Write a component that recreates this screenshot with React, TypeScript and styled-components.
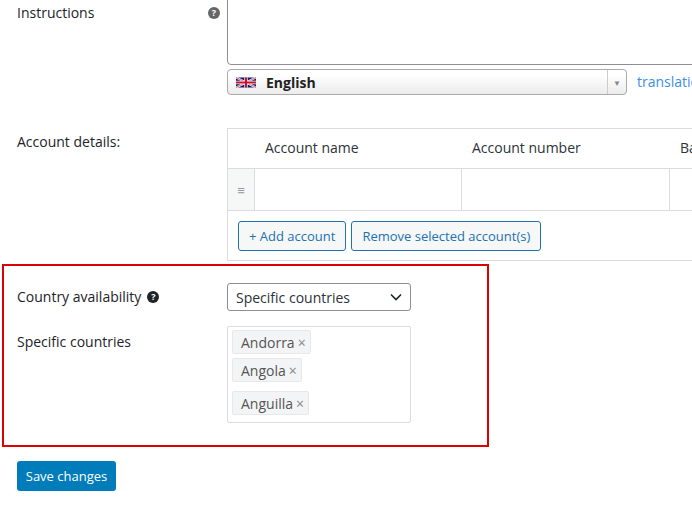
import React from "react";
import styled, { createGlobalStyle } from "styled-components";

const Global = createGlobalStyle`
  body { margin: 0; background: #fff; font-family: "Open Sans", "Noto Sans", sans-serif; font-size: 14px; color: #1d2327; overflow: hidden; }
`;
const Frame = styled.div` width: 692px; height: 518px; overflow: hidden; `;
const Page = styled.div` margin-top: -17px; padding-left: 17px; width: 760px; `;
const Row = styled.div<{ $mt?: number }>` display: flex; margin-top: ${p => p.$mt ?? 0}px; `;
const Label = styled.div<{ $pt?: number }>`
  width: 210px; flex: none; padding-top: ${p => p.$pt ?? 0}px; font-weight: 500; color: #1d2327;
  display: flex; align-items: flex-start; gap: 6px; line-height: 20px;
`;
const LabelText = styled.span` flex: 1; `;
const Help = styled.span<{ $inline?: boolean }>`
  width: 12px; height: 12px; border-radius: 50%; background: ${p => p.$inline ? "#1d2327" : "#666"}; color: #fff;
  font-size: 9px; font-weight: 700; display: inline-flex; align-items: center; justify-content: center; margin-top: 4px;
  margin-right: ${p => p.$inline ? 0 : 7}px; flex: none;
`;
const Field = styled.div` flex: 1; display: flex; flex-direction: column; `;
const TextArea = styled.div` height: 80px; border: 1px solid #8c8f94; border-radius: 0 0 4px 4px; `;
const LangRow = styled.div` display: flex; align-items: flex-start; gap: 10px; margin-top: 4px; `;
const LangSel = styled.div`
  width: 400px; height: 26px; box-sizing: border-box; border: 1px solid #aaa; border-radius: 4px;
  background: linear-gradient(#fff 20%, #ececec); display: flex; align-items: center; padding-left: 8px;
  font-weight: 700; color: #222; gap: 10px;
`;
const LangArrow = styled.div`
  margin-left: auto; width: 18px; align-self: stretch; border-left: 1px solid #ccc; display: flex;
  align-items: center; justify-content: center; font-size: 8px; color: #888;
`;
const Link = styled.span` color: #3a8ee6; font-size: 14px; margin-top: 3px; white-space: nowrap; `;
const Table = styled.div` width: 520px; border: 1px solid #dcdcde; `;
const TRow = styled.div<{ $h: number; $bt?: boolean }>`
  display: grid; grid-template-columns: 27px 207px 208px 1fr; height: ${p => p.$h}px;
  border-top: ${p => p.$bt ? "1px solid #dcdcde" : "none"};
`;
const Th = styled.div` padding-left: 10px; display: flex; align-items: center; font-weight: 500; color: #2c3338; white-space: nowrap; padding-bottom: 2px; `;
const Handle = styled.div` background: #f6f7f7; border-right: 1px solid #dcdcde; display: flex; align-items: center; justify-content: center; color: #999; font-size: 13px; `;
const Td = styled.div<{ $br?: boolean }>` border-right: ${p => p.$br ? "1px solid #dcdcde" : "none"}; `;
const Foot = styled.div` border-top: 1px solid #dcdcde; padding: 10px 10px 9px; display: flex; gap: 5px; `;
const Btn = styled.div`
  height: 30px; box-sizing: border-box; border: 1px solid #2271b1; border-radius: 3px; background: #f6f7f7;
  color: #2271b1; padding: 0 10px; display: flex; align-items: center; font-size: 13px;
`;
const Box = styled.div` margin: 3px 0 0 -15px; width: 487px; height: 183px; box-sizing: border-box; border: 2px solid #d00; padding: 17px 0 0 13px; `;
const Select = styled.div`
  width: 184px; height: 28px; box-sizing: border-box; border: 1px solid #8c8f94; border-radius: 3px;
  display: flex; align-items: center; padding: 0 8px; justify-content: space-between; color: #2c3338;
`;
const Multi = styled.div`
  width: 184px; height: 97px; box-sizing: border-box; border: 1px solid #dcdcde; border-radius: 2px;
  padding: 3px 4px; display: flex; flex-direction: column; align-items: flex-start;
`;
const Chip = styled.div<{ $mt: number }>`
  margin-top: ${p => p.$mt}px; height: 24px; background: #f3f4f5; border: 1px solid #e8e8e8; border-radius: 2px;
  padding: 0 4px 0 8px; display: flex; align-items: center; color: #555; gap: 3px; box-sizing: border-box;
`;
const X = styled.span` color: #888; font-size: 14px; `;
const Save = styled.div`
  margin-top: 14px; width: 99px; height: 30px; border-radius: 3px; background: #007cba; color: #fff;
  font-size: 13px; display: flex; align-items: center; justify-content: center;
`;

const Flag = () => (
  <svg width="20" height="13" viewBox="0 0 60 30">
    <rect width="60" height="30" fill="#012169" />
    <path d="M0 0L60 30M60 0L0 30" stroke="#fff" strokeWidth="6" />
    <path d="M0 0L60 30M60 0L0 30" stroke="#C8102E" strokeWidth="2" />
    <path d="M30 0V30M0 15H60" stroke="#fff" strokeWidth="10" />
    <path d="M30 0V30M0 15H60" stroke="#C8102E" strokeWidth="6" />
  </svg>
);

export default function App() {
  return (
    <Frame>
      <Global />
      <Page>
        <Row>
          <Label $pt={20}><LabelText>Instructions</LabelText><Help>?</Help></Label>
          <Field>
            <TextArea />
            <LangRow>
              <LangSel><Flag />English<LangArrow>▼</LangArrow></LangSel>
              <Link>translation</Link>
            </LangRow>
          </Field>
        </Row>
        <Row $mt={33}>
          <Label $pt={4}><LabelText>Account details:</LabelText></Label>
          <Table>
            <TRow $h={39}><div /><Th>Account name</Th><Th>Account number</Th><Th>Bank name</Th></TRow>
            <TRow $h={41} $bt><Handle>≡</Handle><Td $br /><Td $br /><Td /></TRow>
            <Foot><Btn>+ Add account</Btn><Btn>Remove selected account(s)</Btn></Foot>
          </Table>
        </Row>
        <Box>
          <Row>
            <Label $pt={4}><span>Country availability</span><Help $inline>?</Help></Label>
            <Select>Specific countries
              <svg width="12" height="8" viewBox="0 0 12 8"><path d="M1 1.5l5 5 5-5" stroke="#1d2327" strokeWidth="1.6" fill="none" /></svg>
            </Select>
          </Row>
          <Row $mt={15}>
            <Label $pt={6}><LabelText>Specific countries</LabelText></Label>
            <Multi>
              <Chip $mt={0}>Andorra<X>×</X></Chip>
              <Chip $mt={4}>Angola<X>×</X></Chip>
              <Chip $mt={9}>Anguilla<X>×</X></Chip>
            </Multi>
          </Row>
        </Box>
        <Save>Save changes</Save>
      </Page>
    </Frame>
  );
}
